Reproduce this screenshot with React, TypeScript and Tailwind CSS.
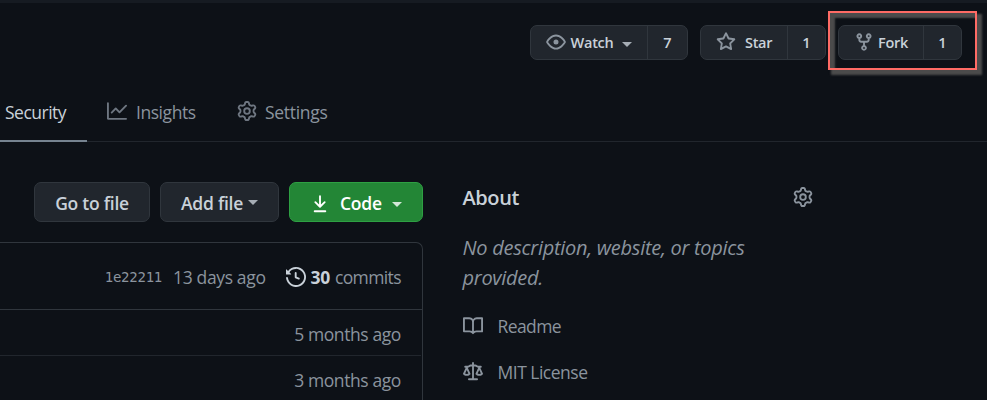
import type { ReactNode } from 'react';

const ICONS = {
  eye: 'M1.679 7.932c.412-.621 1.242-1.75 2.366-2.717C5.175 4.242 6.527 3.5 8 3.5c1.473 0 2.824.742 3.955 1.715 1.124.967 1.954 2.096 2.366 2.717a.119.119 0 010 .136c-.412.621-1.242 1.75-2.366 2.717C10.825 11.758 9.473 12.5 8 12.5c-1.473 0-2.824-.742-3.955-1.715C2.92 9.818 2.09 8.69 1.679 8.068a.119.119 0 010-.136zM8 2c-1.981 0-3.67.992-4.933 2.078C1.797 5.169.88 6.423.43 7.1a1.619 1.619 0 000 1.798c.45.678 1.367 1.932 2.637 3.024C4.329 13.008 6.019 14 8 14c1.981 0 3.67-.992 4.933-2.078 1.27-1.091 2.187-2.345 2.637-3.023a1.619 1.619 0 000-1.798c-.45-.678-1.367-1.932-2.637-3.023C11.671 2.992 9.981 2 8 2zm0 8a2 2 0 100-4 2 2 0 000 4z',
  star: 'M8 .25a.75.75 0 01.673.418l1.882 3.815 4.21.612a.75.75 0 01.416 1.279l-3.046 2.97.719 4.192a.75.75 0 01-1.088.791L8 12.347l-3.766 1.98a.75.75 0 01-1.088-.79l.72-4.194L.818 6.374a.75.75 0 01.416-1.28l4.21-.611L7.327.668A.75.75 0 018 .25zm0 2.445L6.615 5.5a.75.75 0 01-.564.41l-3.097.45 2.24 2.184a.75.75 0 01.216.664l-.528 3.084 2.769-1.456a.75.75 0 01.698 0l2.77 1.456-.53-3.084a.75.75 0 01.216-.664l2.24-2.183-3.096-.45a.75.75 0 01-.564-.41L8 2.694v.001z',
  fork: 'M5 3.25a.75.75 0 11-1.5 0 .75.75 0 011.5 0zm0 2.122a2.25 2.25 0 10-1.5 0v.878A2.25 2.25 0 005.75 8.5h1.5v2.128a2.251 2.251 0 101.5 0V8.5h1.5a2.25 2.25 0 002.25-2.25v-.878a2.25 2.25 0 10-1.5 0v.878a.75.75 0 01-.75.75h-4.5A.75.75 0 015 6.25v-.878zm3.75 7.378a.75.75 0 11-1.5 0 .75.75 0 011.5 0zm3-8.75a.75.75 0 100-1.5.75.75 0 000 1.5z',
  graph: 'M1.5 1.75a.75.75 0 00-1.5 0v12.5c0 .414.336.75.75.75h14.5a.75.75 0 000-1.5H1.5V1.75zm14.28 2.53a.75.75 0 00-1.06-1.06L10 7.94 7.53 5.47a.75.75 0 00-1.06 0L3.22 8.72a.75.75 0 001.06 1.06L7 7.06l2.47 2.47a.75.75 0 001.06 0l5.25-5.25z',
  gear: 'M7.429 1.525a6.593 6.593 0 011.142 0c.036.003.108.036.137.146l.289 1.105c.147.56.55.967.997 1.189.174.086.341.183.501.29.417.278.97.423 1.53.27l1.102-.303c.11-.03.175.016.195.046.219.31.41.641.573.989.014.031.022.11-.059.19l-.815.806c-.411.406-.562.957-.53 1.456a4.588 4.588 0 010 .582c-.032.499.119 1.05.53 1.456l.815.806c.08.08.073.159.059.19a6.494 6.494 0 01-.573.99c-.02.029-.086.074-.195.045l-1.103-.303c-.559-.153-1.112-.008-1.529.27-.16.107-.327.204-.5.29-.449.222-.851.628-.998 1.189l-.289 1.105c-.029.11-.101.143-.137.146a6.613 6.613 0 01-1.142 0c-.036-.003-.108-.037-.137-.146l-.289-1.105c-.147-.56-.55-.967-.997-1.189a4.502 4.502 0 01-.501-.29c-.417-.278-.97-.423-1.53-.27l-1.102.303c-.11.03-.175-.016-.195-.046a6.492 6.492 0 01-.573-.989c-.014-.031-.022-.11.059-.19l.815-.806c.411-.406.562-.957.53-1.456a4.587 4.587 0 010-.582c.032-.499-.119-1.05-.53-1.456l-.815-.806c-.08-.08-.073-.159-.059-.19a6.44 6.44 0 01.573-.99c.02-.029.086-.075.195-.045l1.103.303c.559.153 1.112.008 1.529-.27.16-.107.327-.204.5-.29.449-.222.851-.628.998-1.189l.289-1.105c.029-.11.101-.143.137-.146zM8 0c-.236 0-.47.01-.701.03-.743.065-1.29.615-1.458 1.261l-.29 1.106c-.017.066-.078.158-.211.224a5.994 5.994 0 00-.668.386c-.123.082-.233.09-.3.071L3.27 2.776c-.644-.177-1.392.02-1.82.63a7.977 7.977 0 00-.704 1.217c-.315.675-.111 1.422.363 1.891l.815.806c.05.048.098.147.088.294a6.084 6.084 0 000 .772c.01.147-.038.246-.088.294l-.815.806c-.474.469-.678 1.216-.363 1.891.2.428.436.835.704 1.218.428.609 1.176.806 1.82.63l1.103-.303c.066-.019.176-.011.299.071.213.143.436.272.668.386.133.066.194.158.212.224l.289 1.106c.169.646.715 1.196 1.458 1.26a8.094 8.094 0 001.402 0c.743-.064 1.29-.614 1.458-1.26l.29-1.106c.017-.066.078-.158.211-.224a5.98 5.98 0 00.668-.386c.123-.082.233-.09.3-.071l1.102.302c.644.177 1.392-.02 1.82-.63.268-.382.505-.789.704-1.217.315-.675.111-1.422-.364-1.891l-.814-.806c-.05-.048-.098-.147-.088-.294a6.1 6.1 0 000-.772c-.01-.147.039-.246.088-.294l.814-.806c.475-.469.679-1.216.364-1.891a7.992 7.992 0 00-.704-1.218c-.428-.609-1.176-.806-1.82-.63l-1.103.303c-.066.019-.176.011-.299-.071a5.991 5.991 0 00-.668-.386c-.133-.066-.194-.158-.212-.224L10.16 1.29C9.99.645 9.444.095 8.701.031A8.094 8.094 0 008 0zm1.5 8a1.5 1.5 0 11-3 0 1.5 1.5 0 013 0zM11 8a3 3 0 11-6 0 3 3 0 016 0z',
  download: 'M7.47 10.78a.75.75 0 001.06 0l3.75-3.75a.75.75 0 00-1.06-1.06L8.75 8.44V1.75a.75.75 0 00-1.5 0v6.69L4.78 5.97a.75.75 0 00-1.06 1.06l3.75 3.75zM3.75 13a.75.75 0 000 1.5h8.5a.75.75 0 000-1.5h-8.5z',
  history: 'M1.643 3.143L.427 1.927A.25.25 0 000 2.104V5.75c0 .138.112.25.25.25h3.646a.25.25 0 00.177-.427L2.715 4.215a6.5 6.5 0 11-1.18 4.458.75.75 0 10-1.493.154 8.001 8.001 0 101.6-5.684zM7.75 4a.75.75 0 01.75.75v2.992l2.028.812a.75.75 0 01-.557 1.392l-2.5-1A.75.75 0 017 8.25v-3.5A.75.75 0 017.75 4z',
  book: 'M0 1.75A.75.75 0 01.75 1h4.253c1.227 0 2.317.59 3 1.501A3.744 3.744 0 0111.006 1h4.245a.75.75 0 01.75.75v10.5a.75.75 0 01-.75.75h-4.507a2.25 2.25 0 00-1.591.659l-.622.621a.75.75 0 01-1.06 0l-.622-.621A2.25 2.25 0 005.258 13H.75a.75.75 0 01-.75-.75V1.75zm8.755 3a2.25 2.25 0 012.25-2.25H14.5v9h-3.757c-.71 0-1.4.201-1.992.572l.004-7.322zm-1.504 7.324l.004-5.073-.002-2.253A2.25 2.25 0 005.003 2.5H1.5v9h3.757a3.75 3.75 0 011.994.574z',
  law: 'M8.75.75a.75.75 0 00-1.5 0V2h-.984c-.305 0-.604.08-.869.23l-1.288.737A.25.25 0 013.984 3H1.75a.75.75 0 000 1.5h.428L.066 9.192a.75.75 0 00.154.838l.53-.53-.53.53v.001l.002.002.002.002.006.006.016.015.045.04a3.514 3.514 0 00.686.45A4.492 4.492 0 003 11c.88 0 1.556-.22 2.023-.454a3.515 3.515 0 00.686-.45l.045-.04.016-.015.006-.006.002-.002.001-.002L5.25 9.5l.53.53a.75.75 0 00.154-.838L3.822 4.5h.162c.305 0 .604-.08.869-.23l1.289-.737a.25.25 0 01.124-.033h.984V13h-2.5a.75.75 0 000 1.5h6.5a.75.75 0 000-1.5h-2.5V3.5h.984a.25.25 0 01.124.033l1.29.736c.264.152.563.231.868.231h.162l-2.112 4.692a.75.75 0 00.154.838l.53-.53-.53.53v.001l.002.002.002.002.006.006.016.015.045.04a3.517 3.517 0 00.686.45A4.492 4.492 0 0013 11c.88 0 1.556-.22 2.023-.454a3.512 3.512 0 00.686-.45l.045-.04.01-.01.006-.005.006-.006.002-.002.001-.002-.529-.531.53.53a.75.75 0 00.154-.838L13.823 4.5h.427a.75.75 0 000-1.5h-2.234a.25.25 0 01-.124-.033l-1.29-.736A1.75 1.75 0 009.735 2H8.75V.75zM1.695 9.227c.285.135.718.273 1.305.273s1.02-.138 1.305-.273L3 6.327l-1.305 2.9zm10 0c.285.135.718.273 1.305.273s1.02-.138 1.305-.273L13 6.327l-1.305 2.9z',
};

function Icon({ name, className = '' }: { name: keyof typeof ICONS; className?: string }) {
  return (
    <svg viewBox="0 0 16 16" fill="currentColor" className={`size-5 shrink-0 ${className}`} aria-hidden="true">
      <path fillRule="evenodd" d={ICONS[name]} />
    </svg>
  );
}

function Caret({ className = '' }: { className?: string }) {
  return (
    <svg viewBox="0 0 10 5" fill="currentColor" className={`h-[5px] w-2.5 shrink-0 ${className}`} aria-hidden="true">
      <path d="M0 0h10L5 5z" />
    </svg>
  );
}

function CountButton({ className, main, count, countClass }: { className: string; main: ReactNode; count: string; countClass: string }) {
  return (
    <div className={`flex h-[35px] overflow-hidden rounded-[7px] border border-[#30363d] bg-[#21262d] text-[14.5px] font-semibold text-[#c9d1d9] ${className}`}>
      <button className="flex flex-1 items-center pl-[15px]">{main}</button>
      <span className={`flex items-center justify-center border-l border-[#30363d] ${countClass}`}>{count}</span>
    </div>
  );
}

const toolButton = 'flex h-10 items-center rounded-[7px] border font-semibold';

export default function App() {
  return (
    <div className="relative h-[400px] w-[987px] overflow-hidden bg-[#0d1117] font-['Open_Sans','Noto_Sans',sans-serif] text-[17.5px] text-[#8b949e]">
      <div className="h-[3px] bg-[#161b22]" />

      <header className="flex h-[57px] items-end pl-[530px]">
        <CountButton
          className="w-[158px]"
          countClass="w-10"
          count="7"
          main={
            <>
              <Icon name="eye" className="-mt-0.5 text-[#8b949e]" />
              <span className="ml-1 w-[44px] tracking-[-0.3px]">Watch</span>
              <Caret className="mt-[3px] ml-2 text-[#a6adb5]" />
            </>
          }
        />
        <CountButton
          className="ml-3 w-[126px]"
          countClass="w-[38px]"
          count="1"
          main={
            <>
              <Icon name="star" className="-mt-0.5 text-[#8b949e]" />
              <span className="ml-[9px] tracking-[-0.3px]">Star</span>
            </>
          }
        />
        <CountButton
          className="ml-3 w-[124px]"
          countClass="w-[38px]"
          count="1"
          main={
            <>
              <Icon name="fork" className="-mt-0.5 text-[#8b949e]" />
              <span className="ml-1 tracking-[-0.3px]">Fork</span>
            </>
          }
        />
      </header>

      <nav className="flex h-[82px] border-b border-[#21262d]">
        <a className="-mb-px flex w-[87px] items-center border-b-2 border-[#768390] pt-6 pl-[5px] tracking-[-0.5px] text-[#c9d1d9]">Security</a>
        <a className="flex w-[130px] items-center pt-[23px] pl-5 tracking-[-0.45px]">
          <Icon name="graph" className="-mt-0.5 mr-[9px] text-[#6e7681]" />
          Insights
        </a>
        <a className="flex items-center pt-[23px] pl-5 tracking-[-0.3px]">
          <Icon name="gear" className="-mt-0.5 mr-2 text-[#6e7681]" />
          Settings
        </a>
      </nav>

      <main className="flex">
        <section className="w-[423px] shrink-0 pt-10">
          <div className="flex justify-end gap-2.5 text-[#c9d1d9]">
            <button className={`${toolButton} w-[116px] justify-center border-[#30363d] bg-[#21262d] pt-0.5 tracking-[-0.25px]`}>Go to file</button>
            <button className={`${toolButton} w-[119px] border-[#30363d] bg-[#21262d] pt-0.5 pl-5 tracking-[-0.25px]`}>
              Add file
              <Caret className="-mt-0.5 ml-[5px] text-[#a6adb5]" />
            </button>
            <button className={`${toolButton} w-[134px] border-[#2ea043] bg-[#238636] pt-0.5 pl-5 tracking-[-0.25px] text-white`}>
              <Icon name="download" className="mt-0.5 mr-2.5" />
              Code
              <Caret className="mt-[3px] ml-2.5 text-[#d3e7d7]" />
            </button>
          </div>

          <div className="mt-5 h-[170px] rounded-tr-[7px] border-t border-r border-[#30363d]">
            <div className="flex h-[67px] items-center justify-end border-b border-[#30363d] pt-0.5 pr-[21px] tracking-[-0.35px]">
              <span className="mr-[11px] font-['DejaVu_Sans_Mono',monospace] text-[14px] tracking-[-0.25px]">1e22211</span>
              <span>13 days ago</span>
              <Icon name="history" className="mr-[5px] ml-5 text-[#c9d1d9]" />
              <strong className="mr-[5px] font-bold text-[#c9d1d9]">30</strong>
              <span className="tracking-[-0.6px]">commits</span>
            </div>
            <div className="mr-px flex h-[46px] items-center justify-end border-b border-[#21262d] pt-1 pr-5 tracking-[-0.4px]">5 months ago</div>
            <div className="mr-px flex h-[46px] items-center justify-end pt-0.5 pr-5 tracking-[-0.4px]">3 months ago</div>
          </div>
        </section>

        <aside className="w-[390px] pt-[41px] pl-[39.5px]">
          <div className="flex h-[30px] items-center justify-between">
            <h2 className="text-[20px] font-semibold tracking-[-0.4px] text-[#c9d1d9]">About</h2>
            <Icon name="gear" className="-mt-0.5" />
          </div>
          <p className="mt-5 text-[20px] leading-[30px] tracking-[-0.28px] italic">
            No description, website, or topics
            <br />
            provided.
          </p>
          <a className="mt-5 flex h-[26px] items-center tracking-[-0.6px]">
            <Icon name="book" className="mr-[15px]" />
            Readme
          </a>
          <a className="mt-5 flex h-[26px] items-center tracking-[-0.5px]">
            <Icon name="law" className="mr-[15px]" />
            MIT License
          </a>
        </aside>
      </main>

      <div className="absolute top-[11px] left-[828px] h-[59px] w-[149px] border-2 border-[#ff6b65] shadow-[4px_4px_2px_1px_#4b4b4b,inset_4px_4px_2px_1px_#4b4b4b]" />
    </div>
  );
}
